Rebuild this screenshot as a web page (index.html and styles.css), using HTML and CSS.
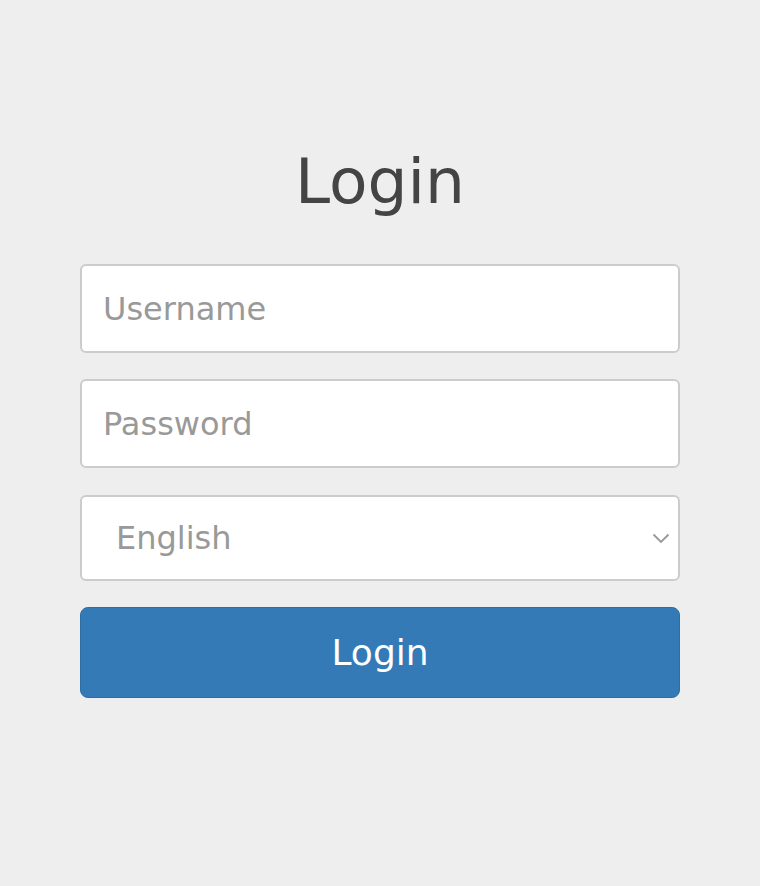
FILE: index.html
```html
<!DOCTYPE html>
<html lang="en">
<head>
<meta charset="utf-8">
<title>Login</title>
<link rel="stylesheet" href="styles.css">
</head>
<body>
<div class="login">
  <h1 class="title">Login</h1>
  <form class="form">
    <input class="field" type="text" placeholder="Username">
    <input class="field" type="password" placeholder="Password">
    <div class="select-wrap">
      <select class="field select">
        <option>English</option>
      </select>
      <svg class="chevron" width="18" height="11" viewBox="0 0 18 11" aria-hidden="true">
        <path d="M1.5 1.5 L9 9 L16.5 1.5" fill="none" stroke="#999" stroke-width="1.8"/>
      </svg>
    </div>
    <button class="btn" type="button">Login</button>
  </form>
</div>
</body>
</html>
```
FILE: styles.css
```css
html, body {
  margin: 0;
  padding: 0;
  background: #eeeeee;
  font-family: "DejaVu Sans", "Open Sans", sans-serif;
}

.login {
  width: 600px;
  margin: 0 auto;
  padding-top: 144px;
}

.title {
  margin: 0 0 44px;
  font-size: 63px;
  line-height: 76px;
  font-weight: 400;
  color: #444444;
  text-align: center;
}

.form {
  display: flex;
  flex-direction: column;
  gap: 26px;
}

.field {
  box-sizing: border-box;
  width: 100%;
  height: 89px;
  margin: 0;
  padding: 0 21px;
  border: 2px solid #cccccc;
  border-radius: 6px;
  background: #ffffff;
  font-family: inherit;
  font-size: 32px;
  color: #555555;
  outline: none;
}

.field::placeholder {
  color: #999999;
}

.select-wrap {
  position: relative;
  margin-top: 1px;
}

.select {
  height: 86px;
  padding: 0 34px;
  color: #999999;
  -webkit-appearance: none;
  appearance: none;
}

.chevron {
  position: absolute;
  right: 10px;
  top: 38px;
}

.btn {
  box-sizing: border-box;
  width: 100%;
  height: 91px;
  margin: 0;
  border: 1px solid #2e6da4;
  border-radius: 8px;
  background: #337ab7;
  color: #ffffff;
  font-family: inherit;
  font-size: 36px;
  cursor: pointer;
}
```
